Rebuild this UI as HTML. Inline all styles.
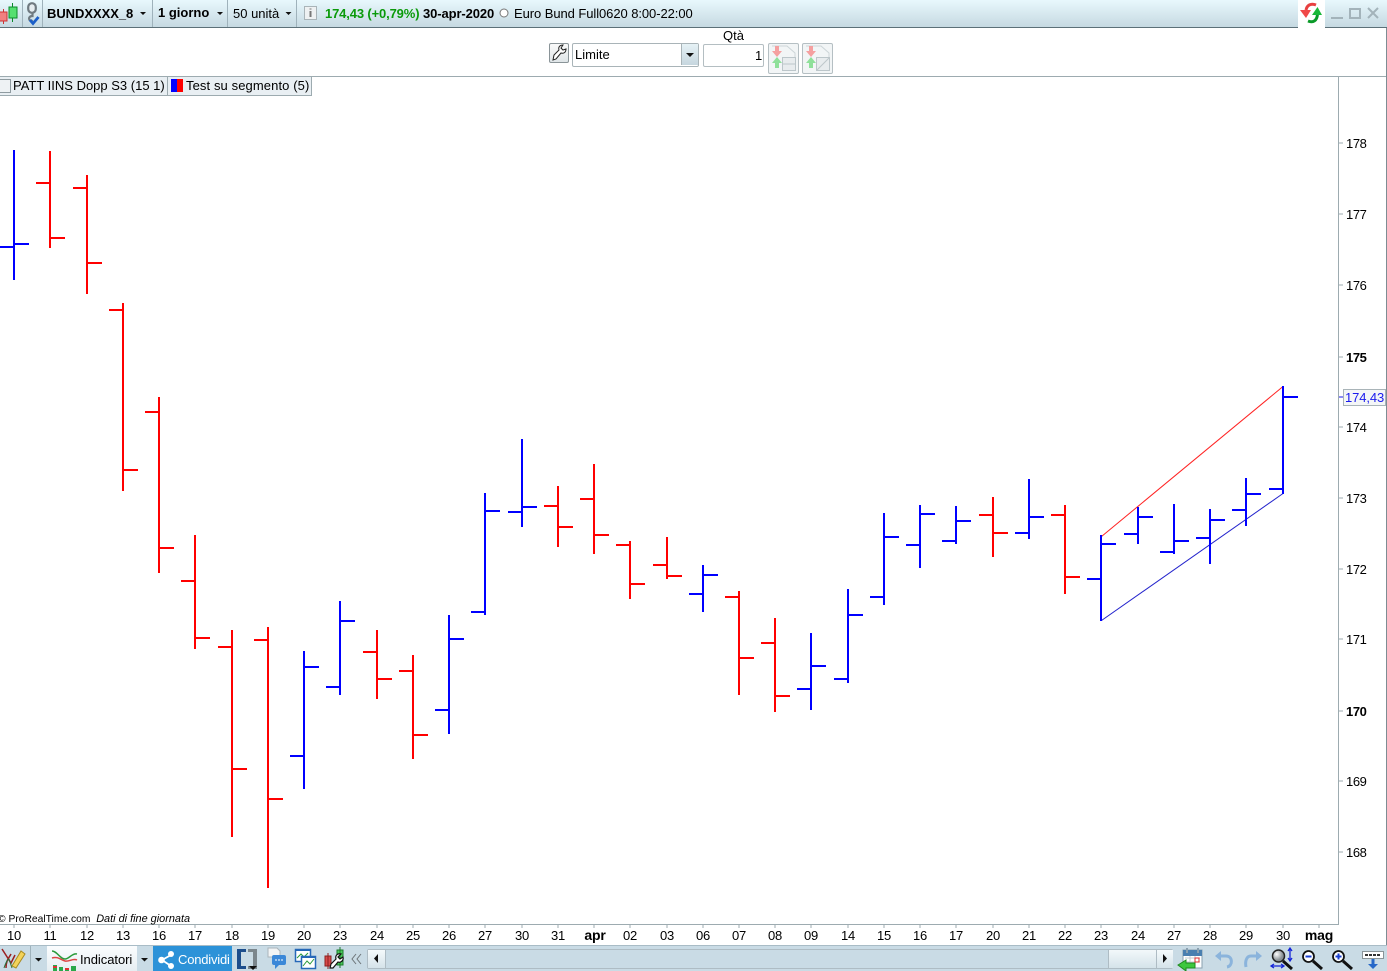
<!DOCTYPE html>
<html><head><meta charset="utf-8"><style>
html,body{margin:0;padding:0;background:#fff}
#p{position:relative;width:1387px;height:971px;overflow:hidden;background:#fff;font:13px "Liberation Sans",sans-serif;color:#000}
.t{position:absolute;white-space:nowrap;line-height:16px;margin-top:1px}
.a{position:absolute}
.b{font-weight:bold}
.d{position:absolute;top:927px;width:40px;text-align:center;line-height:16px;margin-top:1px;letter-spacing:-.2px}
.y{position:absolute;left:1346px;line-height:16px;margin-top:1px;letter-spacing:-.4px}
</style></head><body><div id="p">
<div class="a" style="left:0;top:0;width:1387px;height:27px;background:linear-gradient(#e8f8fd,#c6d9e2)"></div>
<div class="a" style="left:0;top:27px;width:1387px;height:1px;background:#5c7078"></div>
<div class="a" style="left:22px;top:0;width:1px;height:27px;background:#9fb2bb"></div>
<div class="a" style="left:42px;top:0;width:1px;height:27px;background:#9fb2bb"></div>
<div class="a" style="left:152px;top:0;width:1px;height:27px;background:#9fb2bb"></div>
<div class="a" style="left:227px;top:0;width:1px;height:27px;background:#9fb2bb"></div>
<div class="a" style="left:296px;top:0;width:1px;height:27px;background:#9fb2bb"></div>
<div class="a" style="left:1298px;top:0;width:27px;height:28px;background:#fff"></div>
<div class="t b" style="left:47px;top:5px;letter-spacing:-.05px">BUNDXXXX_8</div>
<div class="t b" style="left:158px;top:4px">1 giorno</div>
<div class="t" style="left:233px;top:5px">50 unità</div>
<div class="t b" style="left:325px;top:5px;color:#0a9a0a;letter-spacing:-.14px">174,43 (+0,79%)</div>
<div class="t b" style="left:423px;top:5px;letter-spacing:-.1px">30-apr-2020</div>
<div class="t" style="left:514px;top:5px;letter-spacing:-.07px">Euro Bund Full0620 8:00-22:00</div>
<div class="t" style="left:723px;top:27px">Qtà</div>
<div class="a" style="left:572px;top:43px;width:125px;height:22px;border:1px solid #a9b4b8;border-radius:2px;background:#fff"></div>
<div class="a" style="left:681px;top:44px;width:16px;height:21px;background:linear-gradient(#e6f2f6,#c6d6de);border-left:1px solid #a9b4b8"></div>
<div class="t" style="left:575px;top:46px">Limite</div>
<div class="a" style="left:703px;top:44px;width:59px;height:21px;border:1px solid #b4bec2;border-radius:2px;background:#fff"></div>
<div class="t" style="left:755px;top:47px">1</div>
<div class="a" style="left:549px;top:43px;width:18px;height:18px;border:1px solid #8a9498;border-radius:2px;background:linear-gradient(#fafafa,#dfe5e8)"></div>
<div class="a" style="left:768px;top:43px;width:29px;height:29px;border:1px solid #b5bfc3;border-radius:2px;background:#f2f5f6"></div>
<div class="a" style="left:802px;top:43px;width:29px;height:29px;border:1px solid #b5bfc3;border-radius:2px;background:#f2f5f6"></div>
<div class="a" style="left:0;top:76px;width:1387px;height:1px;background:#9dabb0"></div>
<div class="a" style="left:0;top:77px;width:311px;height:18px;background:#e9eff3;border-right:1px solid #9dabb0;border-bottom:1px solid #9dabb0"></div>
<div class="a" style="left:167px;top:77px;width:1px;height:18px;background:#9dabb0"></div>
<div class="a" style="left:-1px;top:79px;width:10px;height:12px;border:1px solid #8f9ba0;background:#eef2f4"></div>
<div class="a" style="left:171px;top:79px;width:6px;height:13px;background:#00f"></div>
<div class="a" style="left:177px;top:79px;width:6px;height:13px;background:#f00"></div>
<div class="t" style="left:13px;top:77px">PATT IINS Dopp S3 (15 1)</div>
<div class="t" style="left:186px;top:77px;letter-spacing:.1px">Test su segmento (5)</div>
<div class="a" style="left:1338px;top:77px;width:1px;height:848px;background:#9dabb0"></div>
<div class="a" style="left:0;top:924px;width:1339px;height:1px;background:#9dabb0"></div>
<div class="a" style="left:1386px;top:28px;width:1px;height:917px;background:#7d8d94"></div>
<div class="y" style="top:135px">178</div><div class="y" style="top:206px">177</div><div class="y" style="top:277px">176</div>
<div class="y b" style="top:349px">175</div><div class="y" style="top:419px">174</div><div class="y" style="top:490px">173</div>
<div class="y" style="top:561px">172</div><div class="y" style="top:631px">171</div><div class="y b" style="top:703px">170</div>
<div class="y" style="top:773px">169</div><div class="y" style="top:844px">168</div>
<div class="a" style="left:1343px;top:389px;width:41px;height:15px;border:1px solid #a9b4b8;background:#f4f6f7"></div>
<div class="t" style="left:1345px;top:389px;color:#1a1aee;letter-spacing:-.1px">174,43</div>
<div class="t" style="left:-2px;top:910px;font-size:10.3px;line-height:16px">© ProRealTime.com &nbsp;<i style="font-size:10.9px">Dati di fine giornata</i></div>
<div class="d" style="left:-6px">10</div><div class="d" style="left:30px">11</div><div class="d" style="left:67px">12</div><div class="d" style="left:103px">13</div><div class="d" style="left:139px">16</div><div class="d" style="left:175px">17</div><div class="d" style="left:212px">18</div><div class="d" style="left:248px">19</div><div class="d" style="left:284px">20</div><div class="d" style="left:320px">23</div><div class="d" style="left:357px">24</div><div class="d" style="left:393px">25</div><div class="d" style="left:429px">26</div><div class="d" style="left:465px">27</div><div class="d" style="left:502px">30</div><div class="d" style="left:538px">31</div><div class="d b" style="left:575px;font-size:14px;margin-top:0">apr</div><div class="d" style="left:610px">02</div><div class="d" style="left:647px">03</div><div class="d" style="left:683px">06</div><div class="d" style="left:719px">07</div><div class="d" style="left:755px">08</div><div class="d" style="left:791px">09</div><div class="d" style="left:828px">14</div><div class="d" style="left:864px">15</div><div class="d" style="left:900px">16</div><div class="d" style="left:936px">17</div><div class="d" style="left:973px">20</div><div class="d" style="left:1009px">21</div><div class="d" style="left:1045px">22</div><div class="d" style="left:1081px">23</div><div class="d" style="left:1118px">24</div><div class="d" style="left:1154px">27</div><div class="d" style="left:1190px">28</div><div class="d" style="left:1226px">29</div><div class="d" style="left:1263px">30</div><div class="d b" style="left:1299px;font-size:14px;margin-top:0">mag</div>
<div class="a" style="left:0;top:945px;width:1387px;height:26px;background:#c9dbe5"></div>
<div class="a" style="left:0;top:945px;width:1387px;height:1px;background:#a9bcc6"></div>
<div class="a" style="left:47px;top:946px;width:90px;height:25px;background:linear-gradient(#fbfdfe,#e6eef2)"></div>
<div class="a" style="left:153px;top:946px;width:79px;height:25px;background:#2c92d8"></div>
<div class="a" style="left:30px;top:946px;width:1px;height:25px;background:#9fb2bb"></div>
<div class="t" style="left:80px;top:951px;letter-spacing:-.05px">Indicatori</div>
<div class="t" style="left:178px;top:951px;color:#fff;letter-spacing:-.2px">Condividi</div>
<div class="a" style="left:367px;top:949px;width:804px;height:18px;border:1px solid #aebcc4;border-radius:2px;background:#c9dbe5"></div>
<div class="a" style="left:368px;top:950px;width:17px;height:18px;background:linear-gradient(#f5fafc,#d5e3ea);border-right:1px solid #aebcc4"></div>
<div class="a" style="left:1108px;top:950px;width:47px;height:18px;background:linear-gradient(#f2f8fa,#d5e3ea);border-left:1px solid #aebcc4"></div>
<div class="a" style="left:1156px;top:950px;width:16px;height:18px;background:linear-gradient(#f5fafc,#d5e3ea);border-left:1px solid #aebcc4"></div>
<svg class="a" style="left:0;top:0" width="1387" height="971" viewBox="0 0 1387 971" fill="none">
<g shape-rendering="crispEdges" stroke="#9dabb0">
<path d="M1339 143h4M1339 214h4M1339 285h4M1339 357h4M1339 427h4M1339 498h4M1339 569h4M1339 639h4M1339 711h4M1339 781h4M1339 852h4"/>
<path d="M14 925v3M50 925v3M87 925v3M123 925v3M159 925v3M195 925v3M232 925v3M268 925v3M304 925v3M340 925v3M377 925v3M413 925v3M449 925v3M485 925v3M522 925v3M558 925v3M594 925v3M630 925v3M667 925v3M703 925v3M739 925v3M775 925v3M811 925v3M848 925v3M884 925v3M920 925v3M956 925v3M993 925v3M1029 925v3M1065 925v3M1101 925v3M1138 925v3M1174 925v3M1210 925v3M1246 925v3M1283 925v3M1319 925v3"/>
</g>
<path d="M1339 397h4" stroke="#1a1aee" shape-rendering="crispEdges"/>
<path d="M1101.5 536.5L1283 386.5" stroke="#f22" stroke-width="1"/>
<path d="M1101.5 620.5L1283 493.5" stroke="#22c" stroke-width="1"/>
<g stroke-width="2" shape-rendering="crispEdges">
<path stroke="#00f" d="M14 150V280M0 247H14M14 244H29M304 651V789M290 756H304M304 667H319M340 601V695M326 687H340M340 621H355M449 615V734M435 710H449M449 639H464M485 493V615M471 612H485M485 511H500M522 439V527M508 512H522M522 507H537M703 565V612M689 594H703M703 575H718M811 633V710M797 689H811M811 666H826M848 589V683M834 679H848M848 615H863M884 513V605M870 597H884M884 537H899M920 505V568M906 545H920M920 514H935M956 506V544M942 541H956M956 521H971M1029 479V539M1015 533H1029M1029 517H1044M1101 535V621M1087 579H1101M1101 544H1116M1138 507V544M1124 534H1138M1138 517H1153M1174 504V554M1160 552H1174M1174 541H1189M1210 509V564M1196 538H1210M1210 520H1225M1246 478V526M1232 510H1246M1246 494H1261M1283 386V494M1269 489H1283M1283 397H1298"/>
<path stroke="#f00" d="M50 151V248M36 183H50M50 238H65M87 175V294M73 188H87M87 263H102M123 303V491M109 310H123M123 470H138M159 397V573M145 412H159M159 548H174M195 535V649M181 581H195M195 638H210M232 630V837M218 647H232M232 769H247M268 627V888M254 640H268M268 799H283M377 630V699M363 652H377M377 679H392M413 655V759M399 671H413M413 735H428M558 486V547M544 506H558M558 527H573M594 464V554M580 499H594M594 535H609M630 541V599M616 545H630M630 584H645M667 537V579M653 565H667M667 576H682M739 591V695M725 597H739M739 658H754M775 618V712M761 643H775M775 696H790M993 497V557M979 515H993M993 533H1008M1065 505V594M1051 515H1065M1065 577H1080"/>
</g>
<!-- candle icon -->
<path d="M3.500 9v15" stroke="#c33"/><rect x="-.5" y="12" width="7.500" height="9" fill="#f08080" stroke="#c33" stroke-width="1"/>
<path d="M12.500 3v19" stroke="#0a8a2a"/><rect x="9" y="7" width="8" height="11" fill="#55e070" stroke="#0a8a2a" stroke-width="1"/>
<!-- chain -->
<rect x="28.200" y="3.200" width="7.600" height="9.600" rx="3.800" stroke="#6f7a80" stroke-width="2.200" fill="#e6edf0"/>
<path d="M32.500 12v4c-3 0-4 2-3 4 1 1 2 1 3 0" stroke="#6f7a80" stroke-width="2.200"/>
<path d="M30 20l3 3.500 5.500-6.500" stroke="#1c5fc8" stroke-width="2.800"/>
<!-- dropdown arrows -->
<g fill="#111"><path d="M140 12h6l-3 3zM217 12h6l-3 3zM285.500 12h6l-3 3zM686 53h8l-4 4zM35 958h7l-3.500 3.500zM141 958h7l-3.500 3.500z"/></g>
<!-- info -->
<rect x="304.500" y="6.500" width="12" height="13" fill="#eef1f2" stroke="#a9b4b8"/><path d="M310.500 8.500v1M310.500 11v6" stroke="#777" stroke-width="2"/>
<circle cx="504" cy="13" r="4" fill="#fff" stroke="#777"/>
<!-- refresh -->
<path d="M1316 5c-5-2-9 0-10 5" stroke="#e84040" stroke-width="3"/><path d="M1300 10h11l-5 8z" fill="#f04848"/>
<path d="M1308 21c5 2 9 0 9.500-7" stroke="#0a9a28" stroke-width="3"/><path d="M1312 15l5.500-8 4.500 8z" fill="#1ab83a"/>
<!-- window -->
<g stroke="#a3b3ba" stroke-width="2"><path d="M1331 18h12"/><rect x="1350" y="9" width="10" height="9" stroke-width="2"/><path d="M1368 8l10 10M1378 8l-10 10"/></g>
<!-- wrench -->
<path d="M553 60l1-5 5-5c-1-3 1-5 4-5l-2 3 2 2 3-1c0 3-2 5-5 4l-5 6z" stroke="#222" fill="#fff"/>
<!-- order buttons -->
<g>
<path d="M772 46h15l8 7v4" stroke="#cdd5d8"/><path d="M775 46v5h-3l5 6 5-6h-3v-5z" fill="#f5a0a0"/><path d="M775 68v-5h-3l5-6 5 6h-3v5z" fill="#8fe09a"/><rect x="782.500" y="57.500" width="13" height="13" stroke="#bcc6ca" fill="#e8ecee"/><path d="M783 64h12" stroke="#bcc6ca"/>
<path d="M806 46h15l8 7v4" stroke="#cdd5d8"/><path d="M809 46v5h-3l5 6 5-6h-3v-5z" fill="#f5a0a0"/><path d="M809 68v-5h-3l5-6 5 6h-3v5z" fill="#8fe09a"/><rect x="816.500" y="57.500" width="13" height="13" stroke="#bcc6ca" fill="#e8ecee"/><path d="M817 70l12-12" stroke="#bcc6ca"/>
</g>
<!-- pencil -->
<path d="M2 949l9 14 4-8M6 968c0-8 3-10 5-14" stroke="#9a2020" stroke-width="1.500"/><path d="M4 968c2-6 4-9 5-9l3 9" stroke="#27713a"/>
<path d="M12 966l9-15 4 3-9 14z" fill="#f3d35a" stroke="#a88a20"/>
<!-- indicator -->
<path d="M52 951c5 0 8 8 13 8 4 0 7-6 12-5" stroke="#2a9a3a" stroke-width="1.500"/><path d="M52 958c6-2 9 2 13 3s8-3 12-1" stroke="#d44" stroke-width="1.500"/>
<path d="M53 971v-6h4v6zM59 971v-4h4v4zM65 971v-3h4v3zM71 971v-5h5v5z" fill="#2aa84a"/><path d="M53 966h4v2h-4zM65 968h4v2h-4z" fill="#d33"/>
<!-- share -->
<g stroke="#fff" stroke-width="1.800"><path d="M162 960l9-5M162 960l9 6"/></g><g fill="#fff"><circle cx="161.500" cy="960" r="3.300"/><circle cx="171" cy="954" r="3"/><circle cx="171" cy="966" r="3"/></g>
<!-- bracket -->
<path d="M237 949h9v3h-5v14h5v3h-9z" fill="#1d4e8c"/><path d="M248 949h9v20h-9v-3h5v-14h-5z" fill="#7b868c"/><path d="M249 966h8l-4 4z" fill="#111"/>
<!-- chat -->
<path d="M268 948h9l3 3v6h-12z" fill="#f2f4f5" stroke="#aab4ba"/><rect x="272" y="955" width="14" height="10" rx="2" fill="#3b88d8"/><path d="M275 964v5l4-4z" fill="#3b88d8"/><path d="M275 960h2M278 960h2M281 960h2" stroke="#fff"/>
<!-- windows -->
<rect x="295.500" y="949.500" width="15" height="12" fill="#fff" stroke="#2668b8" stroke-width="1.500"/><path d="M296 950h14" stroke="#2668b8" stroke-width="2"/><path d="M297 958l4-4 3 3 4-4" stroke="#2a9a3a"/>
<rect x="301.500" y="956.500" width="14" height="12" fill="#fff" stroke="#2668b8" stroke-width="1.500"/><path d="M302 957h13" stroke="#2668b8" stroke-width="2"/><path d="M303 966l4-5 3 3 4-5" stroke="#2a9a3a"/>
<!-- tools -->
<rect x="325" y="956" width="6" height="10" fill="#d84a4a" stroke="#8a2020"/><path d="M328 953v16" stroke="#8a2020"/><rect x="337" y="950" width="6" height="15" fill="#4ac85a" stroke="#1a7a2a"/><path d="M340 947v21" stroke="#1a7a2a"/>
<path d="M330 968l1-4 5-5c-1-3 1-6 5-5l-3 3 2 2 3-2c1 4-3 6-5 5l-5 6z" fill="#fff" stroke="#111" stroke-width="1.200"/>
<!-- chevrons -->
<path d="M356 954l-4 5 4 5M361 954l-4 5 4 5" stroke="#6c7478"/>
<path d="M378 954v9l-4-4.500zM1163 954v9l4-4.500z" fill="#111"/>
<!-- calendar -->
<rect x="1183" y="950" width="19" height="18" fill="#fff" stroke="#8aa0b0"/><rect x="1183" y="950" width="19" height="6" fill="#4a7fb0"/><path d="M1187 948v5M1198 948v5" stroke="#8aa0b0" stroke-width="2"/><path d="M1185 958h15M1185 962h15M1190 956v11M1195 956v11" stroke="#c4ccd2"/><rect x="1195" y="958" width="4" height="4" stroke="#e03030"/>
<path d="M1178 965l8-5v3h9v5h-9v3z" fill="#3ec83e" stroke="#1f8a1f"/>
<!-- undo redo -->
<path d="M1218 956h8c7 0 7 10 1 11" stroke="#8bb4dc" stroke-width="3"/><path d="M1215 956l6-5v10z" fill="#8bb4dc"/>
<path d="M1259 956h-8c-5 0-6 6-5 11" stroke="#8bb4dc" stroke-width="3"/><path d="M1262 956l-6-5v10z" fill="#8bb4dc"/>
<!-- zoom -->
<defs><radialGradient id="g" cx=".35" cy=".35"><stop offset="0" stop-color="#fff"/><stop offset="1" stop-color="#8a9296"/></radialGradient></defs>
<circle cx="1278.500" cy="956" r="6" fill="url(#g)" stroke="#222" stroke-width="1.500"/><path d="M1283 961l9 8" stroke="#111" stroke-width="3"/>
<path d="M1290 949v11M1288 951l2-3 2 3M1288 958l2 3 2-3M1272 966h11M1274 964l-3 2 3 2M1281 964l3 2-3 2" stroke="#1424d8" stroke-width="1.300"/>
<circle cx="1308.500" cy="956.500" r="5.500" fill="#fff" stroke="#111" stroke-width="1.800"/><path d="M1305.500 956.500h6" stroke="#1a40d0" stroke-width="2"/><path d="M1313 961l9 8" stroke="#111" stroke-width="3"/>
<circle cx="1338.500" cy="956.500" r="5.500" fill="#fff" stroke="#111" stroke-width="1.800"/><path d="M1335.500 956.500h6M1338.500 953.500v6" stroke="#1a40d0" stroke-width="2"/><path d="M1343 961l9 8" stroke="#111" stroke-width="3"/>
<rect x="1362.500" y="951.500" width="21" height="7" fill="#fff" stroke="#8a9498"/><path d="M1365 955h3M1369 955h3M1373 955h3M1377 955h3" stroke="#333" stroke-width="2"/><path d="M1373 959v6" stroke="#2668c8" stroke-width="3"/><path d="M1368 964h10l-5 5z" fill="#2668c8"/>
</svg>
</div></body></html>
